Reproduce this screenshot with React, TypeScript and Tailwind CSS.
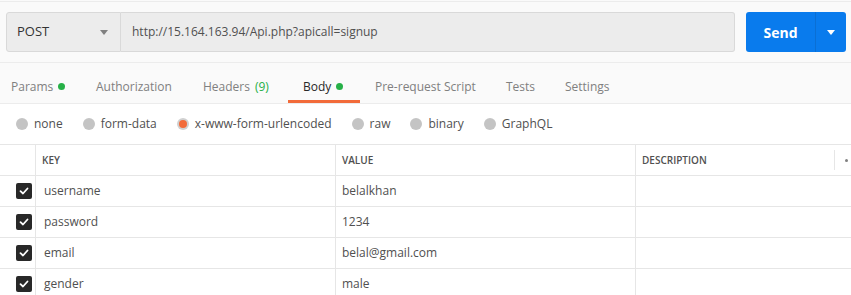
import React from 'react';

const tabs = [
  { label: 'Params', dot: true, w: 'w-[81px] pl-[11px]' },
  { label: 'Authorization', w: 'w-[107px] pl-[15px]' },
  { label: 'Headers', count: '(9)', w: 'w-[100px] pl-[15px]' },
  { label: 'Body', dot: true, active: true, w: 'w-[72px] pl-[15px]' },
  { label: 'Pre-request Script', w: 'w-[131px] pl-[15px]' },
  { label: 'Tests', w: 'w-[59px] pl-[15px]' },
  { label: 'Settings', w: 'w-[80px] pl-[15px]' },
];

const bodyTypes = ['none', 'form-data', 'x-www-form-urlencoded', 'raw', 'binary', 'GraphQL'];

const rows = [
  { key: 'username', value: 'belalkhan' },
  { key: 'password', value: '1234' },
  { key: 'email', value: 'belal@gmail.com' },
  { key: 'gender', value: 'male' },
];

const Checkbox: React.FC = () => (
  <span className="flex h-4 w-4 items-center justify-center rounded-[2px] bg-[#282828]">
    <svg width="10" height="10" viewBox="0 0 10 10" fill="none">
      <path d="M1.5 5.2 L4 7.5 L8.5 2.5" stroke="white" strokeWidth="1.8" strokeLinecap="round" strokeLinejoin="round" />
    </svg>
  </span>
);

export default function App() {
  return (
    <div
      className="h-[295px] w-[851px] overflow-hidden bg-[#fafafa] text-[#505050]"
      style={{ fontFamily: '"Open Sans", "Liberation Sans", sans-serif' }}
    >
      {/* Request bar */}
      <div className="mt-[1px] border-t border-[#ececec] pb-[10px] pl-[6px] pr-[5px] pt-[10px]">
        <div className="flex h-[40px] items-stretch">
          <div className="flex w-[115px] items-center justify-between rounded-l-[3px] border border-[#d9d9d9] bg-[#ececec] pl-[10px] pr-[12px] text-[13px] text-[#333]">
            <span>POST</span>
            <svg width="8" height="5" viewBox="0 0 8 5">
              <path d="M0 0 H8 L4 5 Z" fill="#808080" />
            </svg>
          </div>
          <div className="flex w-[614px] items-center rounded-r-[3px] border border-l-0 border-[#d9d9d9] bg-[#ececec] pl-[11px] text-[12px] text-[#505050]">
            http://15.164.163.94/Api.php?apicall=signup
          </div>
          <div className="ml-[11px] flex w-[100px] overflow-hidden rounded-[3px] bg-[#097bed] text-white">
            <div className="flex w-[69px] items-center justify-center text-[14px] font-bold">Send</div>
            <div className="w-px bg-[#0a6fd4]" />
            <div className="flex flex-1 items-center justify-center">
              <svg width="8" height="5" viewBox="0 0 8 5">
                <path d="M0 0 H8 L4 5 Z" fill="white" />
              </svg>
            </div>
          </div>
        </div>
      </div>

      {/* Tabs */}
      <div className="flex h-[42px] items-stretch border-y border-[#ececec] text-[12px]">
        {tabs.map((tab) => (
          <div
            key={tab.label}
            className={`relative flex shrink-0 items-center pt-[7px] ${tab.w} ${
              tab.active ? 'text-[#282828]' : 'text-[#808080]'
            }`}
          >
            <span>{tab.label}</span>
            {tab.count && <span className="ml-[5px] text-[#26b047]">{tab.count}</span>}
            {tab.dot && <span className="ml-[5px] h-[7px] w-[7px] rounded-full bg-[#26b047]" />}
            {tab.active && <span className="absolute bottom-0 left-0 right-0 h-[3px] bg-[#f26b3a]" />}
          </div>
        ))}
      </div>

      {/* Body types */}
      <div className="flex h-[40px] items-center gap-[20px] bg-white pl-[16px] text-[12px] text-[#505050]">
        {bodyTypes.map((t) => (
          <div key={t} className="flex items-center gap-[6px]">
            {t === 'x-www-form-urlencoded' ? (
              <span className="flex h-[12px] w-[12px] items-center justify-center rounded-full bg-[#d0d0d0]">
                <span className="h-[8px] w-[8px] rounded-full bg-[#f26b3a]" />
              </span>
            ) : (
              <span className="h-[12px] w-[12px] rounded-full bg-[#c4c4c4]" />
            )}
            <span>{t}</span>
          </div>
        ))}
      </div>

      {/* Table */}
      <div className="bg-white">
        <div className="flex h-[32px] border-y border-[#e6e6e6] text-[10px] font-semibold text-[#505050]">
          <div className="w-[36px] border-r border-[#e6e6e6]" />
          <div className="flex w-[300px] items-center border-r border-[#e6e6e6] pl-[6px]">KEY</div>
          <div className="flex w-[300px] items-center border-r border-[#e6e6e6] pl-[6px]">VALUE</div>
          <div className="flex w-[198px] items-center pl-[6px]">DESCRIPTION</div>
          <div className="my-[5px] w-px bg-[#e6e6e6]" />
          <div className="flex flex-1 items-center justify-center pl-[6px]">
            <span className="h-[3px] w-[3px] rounded-full bg-[#808080]" />
          </div>
        </div>
        {rows.map((r) => (
          <div key={r.key} className="flex h-[31px] border-b border-[#e6e6e6] text-[12px] text-[#505050]">
            <div className="flex w-[36px] items-center border-r border-[#e6e6e6] pl-[16px]">
              <Checkbox />
            </div>
            <div className="flex w-[300px] items-center border-r border-[#e6e6e6] pl-[8px]">{r.key}</div>
            <div className="flex w-[300px] items-center border-r border-[#e6e6e6] pl-[6px]">{r.value}</div>
            <div className="flex-1" />
          </div>
        ))}
      </div>
    </div>
  );
}
